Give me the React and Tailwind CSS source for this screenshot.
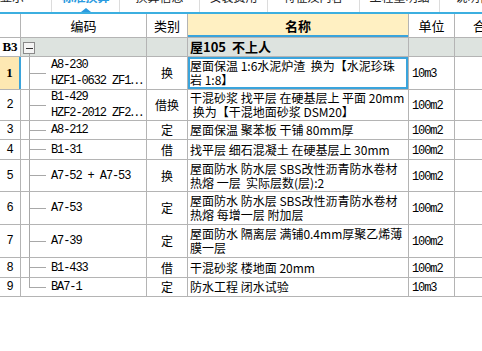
import React from 'react'

const cjk = { fontFamily: '"Noto Sans CJK SC", "Noto Sans", sans-serif' }
const mono = { fontFamily: '"Liberation Mono", "Noto Sans CJK SC", monospace' }
const serif = { fontFamily: '"Liberation Serif", "Noto Sans CJK SC", serif' }

const tabs = [
  { label: '工料机显示', w: 'w-[52px]', first: true },
  { label: '标准换算', w: 'w-[68px]', active: true },
  { label: '换算信息', w: 'w-[80px]' },
  { label: '安装费用', w: 'w-[68px]' },
  { label: '特征及内容', w: 'w-[92px]' },
  { label: '工程量明细', w: 'w-[80px]' },
  { label: '说明信息', w: 'w-[80px]' },
]

const rows = [
  { n: '1', code: ['A8-230', 'HZF1-0632 ZF1'], more: true, type: '换', name: ['屋面保温 1:6水泥炉渣  换为【水泥珍珠', '岩 1:8】'], unit: '10m3', h: 'h-[33px]', sel: true },
  { n: '2', code: ['B1-429', 'HZF2-2012 ZF2'], more: true, type: '借换', name: ['干混砂浆 找平层 在硬基层上 平面 20mm', ' 换为【干混地面砂浆 DSM20】'], unit: '100m2', h: 'h-[31px]' },
  { n: '3', code: ['A8-212'], type: '定', name: ['屋面保温 聚苯板 干铺 80mm厚'], unit: '100m2', h: 'h-[19px]' },
  { n: '4', code: ['B1-31'], type: '借', name: ['找平层 细石混凝土 在硬基层上 30mm'], unit: '100m2', h: 'h-[20px]' },
  { n: '5', code: ['A7-52 + A7-53'], type: '换', name: ['屋面防水 防水层 SBS改性沥青防水卷材', '热熔 一层  实际层数(层):2'], unit: '100m2', h: 'h-[32px]' },
  { n: '6', code: ['A7-53'], type: '定', name: ['屋面防水 防水层 SBS改性沥青防水卷材', '热熔 每增一层 附加层'], unit: '100m2', h: 'h-[33px]' },
  { n: '7', code: ['A7-39'], type: '定', name: ['屋面防水 隔离层 满铺0.4mm厚聚乙烯薄', '膜一层'], unit: '100m2', h: 'h-[33px]' },
  { n: '8', code: ['B1-433'], type: '借', name: ['干混砂浆 楼地面 20mm'], unit: '100m2', h: 'h-[20px]' },
  { n: '9', code: ['BA7-1'], type: '定', name: ['防水工程 闭水试验'], unit: '10m3', h: 'h-[19px]', last: true },
]

function TabStrip() {
  return (
    <div className="flex h-[12px] bg-white overflow-hidden">
      {tabs.map((t) => (
        <div
          key={t.label}
          className={`${t.w} shrink-0 h-[12px] border-r border-[#dcdcdc] flex flex-col items-center justify-between overflow-hidden ${t.first ? 'items-end pr-[27px]' : ''}`}
        >
          <span
            className={`-mt-[9px] text-[12px] leading-[12px] whitespace-nowrap ${t.active ? 'text-[#2a9ae0] font-bold' : 'text-[#222]'}`}
            style={cjk}
          >
            {t.label}
          </span>
          {t.active && (
            <span className="w-0 h-0 border-l-[5px] border-r-[5px] border-b-[4px] border-l-transparent border-r-transparent border-b-[#2a9ae0]" />
          )}
        </div>
      ))}
      <div className="flex-1" />
    </div>
  )
}

function TreeLink({ last }) {
  return (
    <div className="ml-[8px] w-[17px] self-stretch flex flex-col shrink-0">
      <div className="flex-1 border-l border-b border-[#a8a8a8]" />
      <div className={`flex-1 ${last ? '' : 'border-l border-[#a8a8a8]'}`} />
    </div>
  )
}

function DataRow({ r }) {
  return (
    <div className={`flex ${r.h} border-b border-[#b4b4b4] bg-white`}>
      <div
        className={`w-[21px] shrink-0 flex items-center justify-center text-[12px] ${r.sel ? 'bg-[#fde8b2] border-r-2 border-[#3aa4dc] font-bold text-[13px]' : 'border-r border-[#b4b4b4]'}`}
        style={r.sel ? serif : mono}
      >
        {r.n}
      </div>
      <div className="w-[126px] shrink-0 flex border-r border-[#b4b4b4]">
        <TreeLink last={r.last} />
        <div className="pl-[5px] flex flex-col justify-center text-[12px] leading-[14px] tracking-[-1.1px] whitespace-pre" style={mono}>
          {r.code.map((c, i) => (
            <div key={c}>
              {c}
              {r.more && i === 1 && (
                <span className="tracking-normal" style={cjk}>…</span>
              )}
            </div>
          ))}
        </div>
      </div>
      <div className="w-[41px] shrink-0 flex items-center justify-center text-[12px] border-r border-[#b4b4b4]" style={cjk}>
        {r.type}
      </div>
      <div
        className={`w-[221px] shrink-0 flex flex-col justify-center pl-[2px] text-[12px] leading-[14px] whitespace-pre overflow-hidden border-r border-[#b4b4b4] ${r.sel ? 'shadow-[inset_0_0_0_2px_#3aa4dc]' : ''}`}
        style={cjk}
      >
        {r.name.map((l) => (
          <div key={l}>{l}</div>
        ))}
      </div>
      <div className="w-[46px] shrink-0 flex items-center pl-[3px] pt-[2px] text-[12px] tracking-[-1.1px] border-r border-[#b4b4b4]" style={mono}>
        {r.unit}
      </div>
      <div className="w-[60px] shrink-0" />
    </div>
  )
}

export default function App() {
  return (
    <div className="w-[482px] h-[351px] overflow-hidden bg-white text-black">
      <TabStrip />
      <div className="h-[2px] bg-[#3cafe0]" />

      {/* header */}
      <div className="flex h-[24px] border-b border-[#b4b4b4] bg-white text-[13px]" style={cjk}>
        <div className="w-[21px] shrink-0 border-r border-[#b4b4b4]" />
        <div className="w-[126px] shrink-0 border-r border-[#b4b4b4] flex items-center justify-center">编码</div>
        <div className="w-[41px] shrink-0 border-r border-[#b4b4b4] flex items-center justify-center">类别</div>
        <div className="w-[221px] shrink-0 border-r border-[#b4b4b4] bg-[#fff0c2] font-bold flex items-center justify-center shadow-[inset_0_-2px_0_#3aa4dc]">名称</div>
        <div className="w-[46px] shrink-0 border-r border-[#b4b4b4] flex items-center justify-center">单位</div>
        <div className="w-[60px] shrink-0 flex items-center pl-[18px] whitespace-nowrap">合价</div>
      </div>

      {/* group row */}
      <div className="flex h-[19px] border-b border-[#b4b4b4] bg-[#dde3df]">
        <div className="w-[21px] shrink-0 bg-white border-r border-[#b4b4b4] flex items-center justify-center text-[13px] font-bold" style={serif}>
          B3
        </div>
        <div className="w-[126px] shrink-0 border-r border-[#b4b4b4] flex flex-col pl-[2px]">
          <div className="mt-[4px] w-[12px] h-[12px] border border-[#8a8a8a] bg-[#f4f4f4] flex items-center justify-center">
            <div className="w-[7px] h-px bg-[#333]" />
          </div>
          <div className="ml-[6px] flex-1 border-l border-[#a8a8a8]" />
        </div>
        <div className="w-[41px] shrink-0 border-r border-[#b4b4b4]" />
        <div className="w-[221px] shrink-0 border-r border-[#b4b4b4] flex items-center pl-[2px] text-[13px] font-bold whitespace-pre" style={cjk}>
          屋105  不上人
        </div>
        <div className="w-[46px] shrink-0 border-r border-[#b4b4b4]" />
        <div className="w-[60px] shrink-0" />
      </div>

      {rows.map((r) => (
        <DataRow key={r.n} r={r} />
      ))}
    </div>
  )
}
